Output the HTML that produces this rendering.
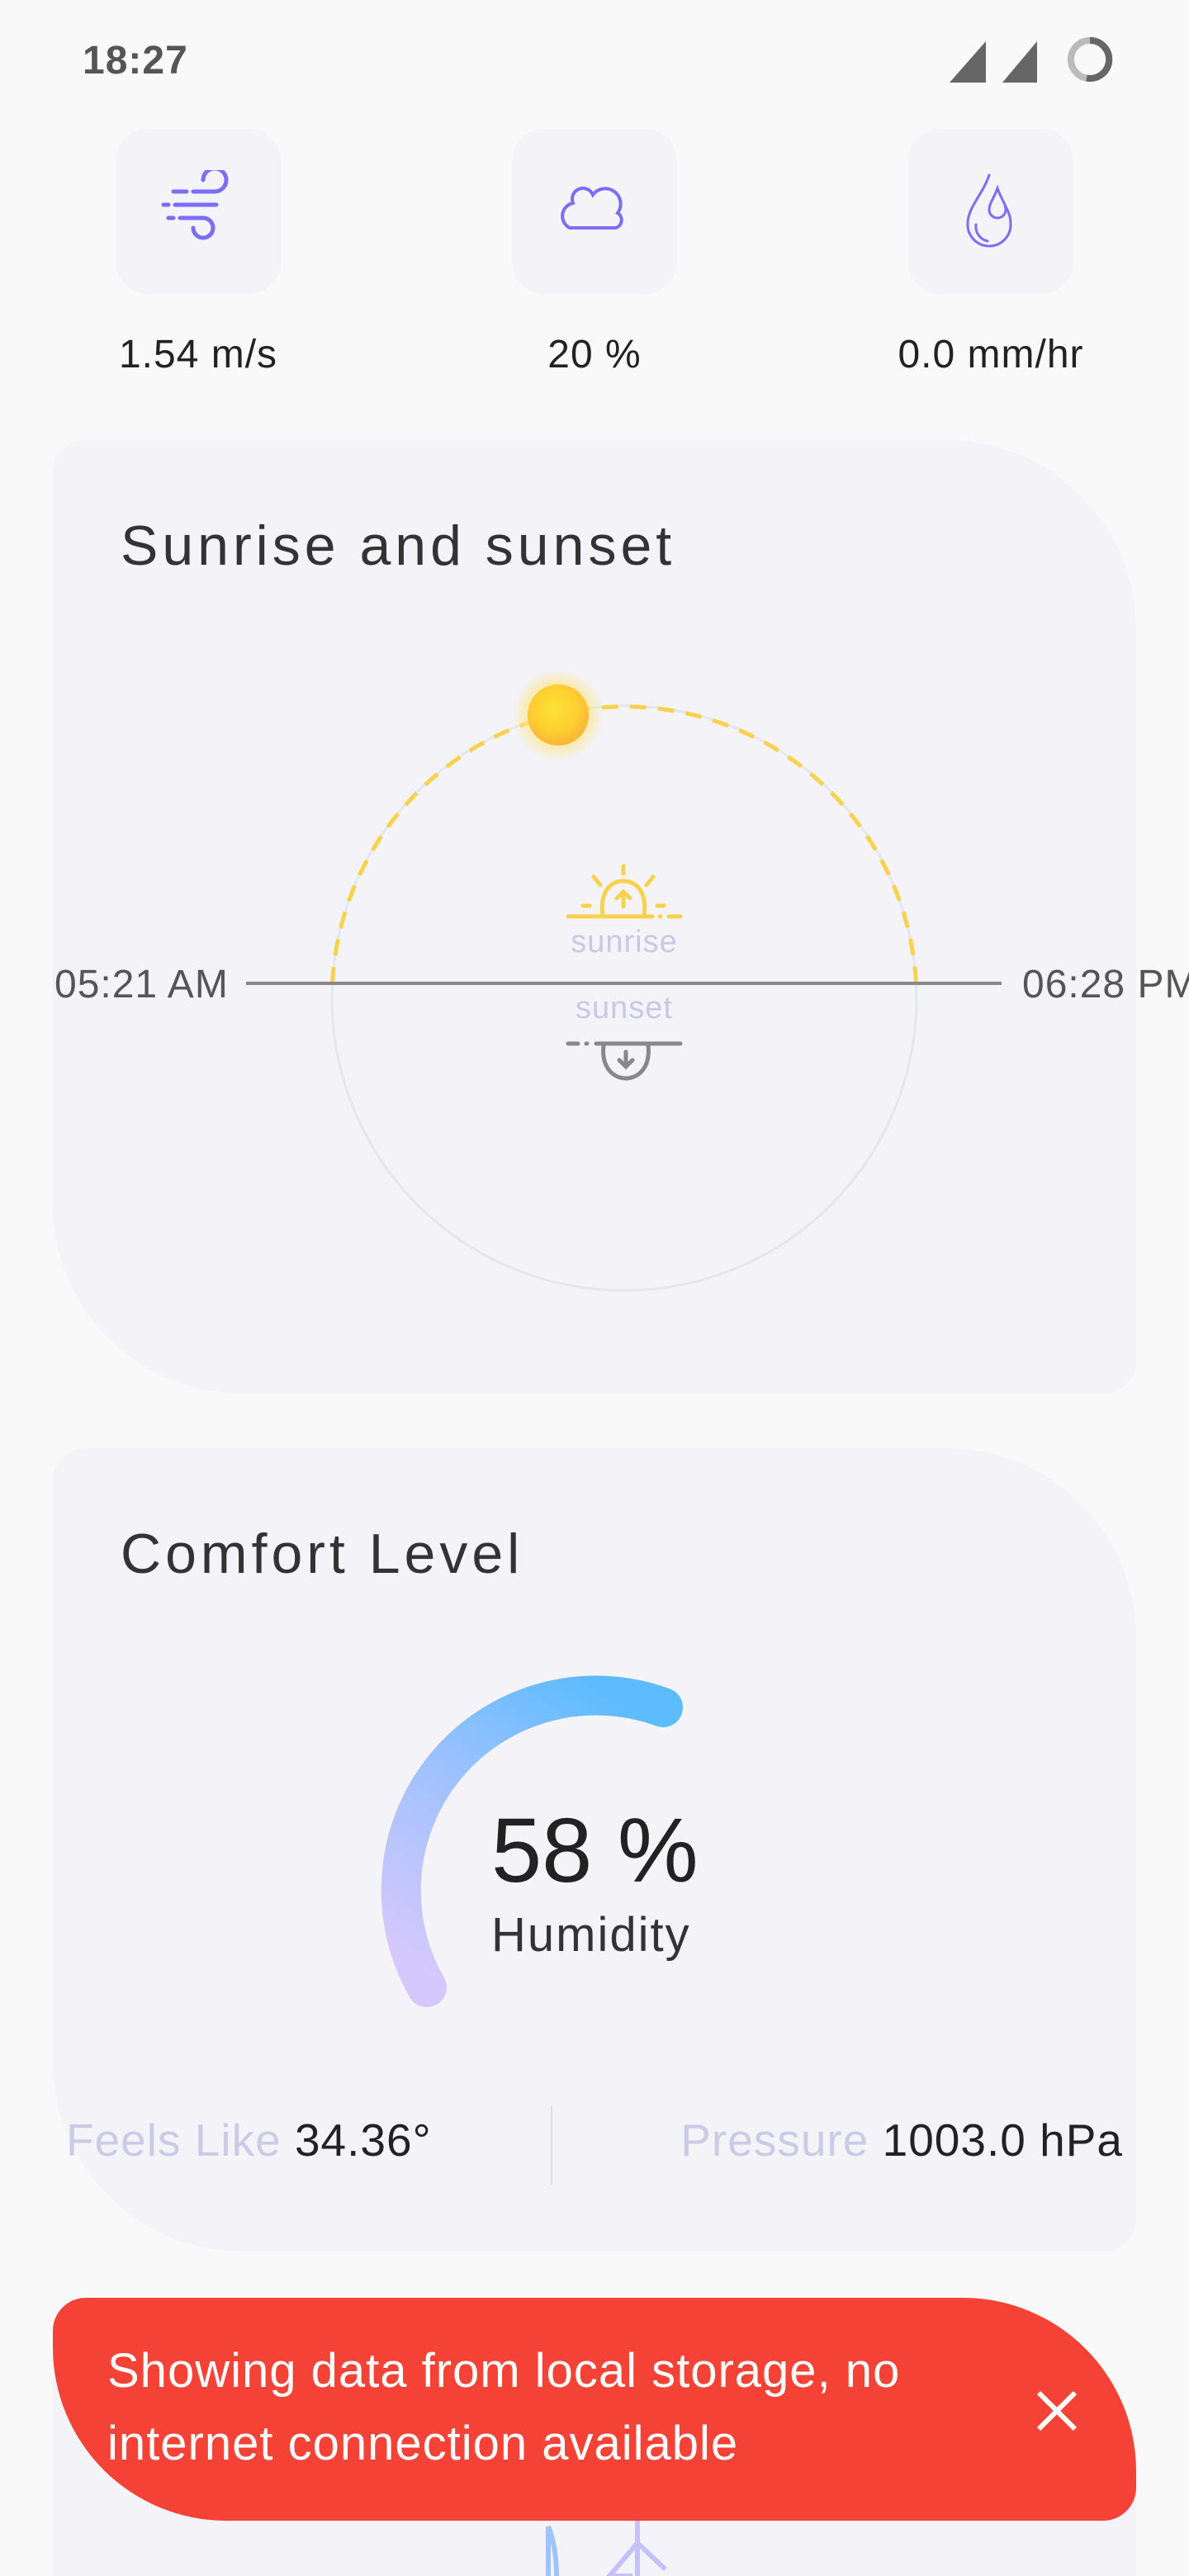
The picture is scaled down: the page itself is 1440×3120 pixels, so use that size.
<!DOCTYPE html>
<html><head><meta charset="utf-8">
<style>
html,body{margin:0;padding:0;width:1440px;height:3120px;overflow:hidden;}
body{background:#f9f9f9;position:relative;font-family:"Liberation Sans",sans-serif;}
.abs{position:absolute;}
.box{position:absolute;top:156px;width:200px;height:200px;border-radius:40px;background:#f3f3f8;}
.lbl{position:absolute;top:402px;width:300px;text-align:center;font-size:48px;color:#222;letter-spacing:1px;}
.card{position:absolute;left:64px;width:1312px;background:#f3f3f8;border-radius:40px 230px 40px 230px / 40px 230px 40px 230px;}
.title{position:absolute;left:146px;font-size:68px;color:#333;letter-spacing:5px;}
</style></head><body>
<div class="abs" style="left:100px;top:46px;font-size:48px;font-weight:bold;color:#555;letter-spacing:1px;">18:27</div>
<svg class="abs" style="left:1140px;top:36px" width="220" height="70" viewBox="0 0 220 70">
<polygon points="10,64 54,14 54,64" fill="#666"/>
<polygon points="74,64 116,14 116,64" fill="#666"/>
<circle cx="180" cy="36" r="23" fill="none" stroke="#bbb" stroke-width="8"/>
<path d="M180 13 A23 23 0 1 1 176 58.6" fill="none" stroke="#666" stroke-width="8"/>
</svg>

<div class="box" style="left:140px"></div>
<div class="box" style="left:620px"></div>
<div class="box" style="left:1100px"></div>
<svg class="abs" style="left:190px;top:206px" width="100" height="100" viewBox="0 0 100 100" fill="none" stroke="#7b6ef6" stroke-width="5" stroke-linecap="round">
<path d="M20 26 H36 M44 26 H70 A14 14 0 1 0 56 12"/>
<path d="M8 42 H14 M22 42 H72"/>
<path d="M14 58 H20 M28 58 H56 A12 12 0 1 1 44 70"/>
</svg>
<svg class="abs" style="left:670px;top:206px" width="100" height="100" viewBox="0 0 100 100" fill="none" stroke="#7b6ef6" stroke-width="4" stroke-linecap="round">
<path d="M20 70 H48 M52 70 H54 M58 70 H76 A10 10 0 0 0 78 52 A16 16 0 0 0 48 30 A12 12 0 0 0 24 40 A16 16 0 0 0 20 70 Z"/>
</svg>
<svg class="abs" style="left:1150px;top:206px" width="100" height="100" viewBox="0 0 100 100" fill="none" stroke="#7b6ef6" stroke-width="3" stroke-linecap="round">
<path d="M48 6 C40 30 22 45 22 65 A26 26 0 0 0 48 92 A26 26 0 0 0 74 65 C74 55 70 48 66 40"/>
<path d="M58 22 C54 34 48 40 48 48 A10 10 0 0 0 68 48 C68 40 62 34 58 22Z"/>
<path d="M32 66 A18 18 0 0 0 46 86"/>
</svg>
<div class="lbl" style="left:90px">1.54 m/s</div>
<div class="lbl" style="left:570px">20 %</div>
<div class="lbl" style="left:1050px">0.0 mm/hr</div>

<div class="card" style="top:533px;height:1155px;"></div>
<div class="title" style="top:622px;">Sunrise and sunset</div>
<svg class="abs" style="left:0;top:533px" width="1440" height="1155" viewBox="0 533 1440 1155">
<defs><radialGradient id="sun" cx="0.45" cy="0.4" r="0.6"><stop offset="0" stop-color="#fde034"/><stop offset="0.6" stop-color="#fdd030"/><stop offset="1" stop-color="#fbb43a"/></radialGradient>
<radialGradient id="glow"><stop offset="0.6" stop-color="#fde68a" stop-opacity="0.8"/><stop offset="1" stop-color="#fde68a" stop-opacity="0"/></radialGradient></defs>
<circle cx="756" cy="1209" r="354" fill="none" stroke="#e6e6ee" stroke-width="3"/>
<path d="M402.5 1191 A354 354 0 0 1 1109.5 1191" fill="none" stroke="#f8d24a" stroke-width="5" stroke-dasharray="20 14"/>
<line x1="298" y1="1191" x2="1213" y2="1191" stroke="#888" stroke-width="4"/>
<circle cx="676" cy="866" r="56" fill="url(#glow)"/>
<circle cx="676" cy="866" r="37" fill="url(#sun)"/>
<g fill="none" stroke="#f8d24a" stroke-width="5" stroke-linecap="round">
<path d="M688 1110 H790 M799 1110 H800 M810 1110 H824"/>
<path d="M730 1108 C726 1080 740 1067 755 1067 C770 1067 784 1080 780 1108"/>
<path d="M755 1098 V1080 M747 1088 L755 1080 L763 1088"/>
<path d="M755 1049 V1058 M719 1062 L727 1072 M791 1062 L783 1072 M706 1097 H714 M796 1097 H804"/>
</g>
<g fill="none" stroke="#888" stroke-width="5" stroke-linecap="round">
<path d="M688 1264 H700 M710 1264 H711 M722 1264 H824"/>
<path d="M731 1266 C728 1292 742 1306 758 1306 C774 1306 788 1292 785 1266"/>
<path d="M758 1274 V1292 M750 1284 L758 1292 L766 1284"/>
</g>
<text x="756" y="1153" text-anchor="middle" font-size="38" fill="#c9c9e6" font-family="Liberation Sans" letter-spacing="1">sunrise</text>
<text x="756" y="1233" text-anchor="middle" font-size="38" fill="#c9c9e6" font-family="Liberation Sans" letter-spacing="1">sunset</text>
<text x="66" y="1208" font-size="48" fill="#555" font-family="Liberation Sans" letter-spacing="1">05:21 AM</text>
<text x="1238" y="1208" font-size="48" fill="#555" font-family="Liberation Sans" letter-spacing="1">06:28 PM</text>
</svg>

<div class="card" style="top:1754px;height:973px;"></div>
<div class="title" style="top:1843px;">Comfort Level</div>
<svg class="abs" style="left:0;top:1754px" width="1440" height="973" viewBox="0 1754 1440 973">
<defs><linearGradient id="g" x1="0.2" y1="1" x2="0.8" y2="0"><stop offset="0" stop-color="#d4c8fc"/><stop offset="0.5" stop-color="#a2c2fd"/><stop offset="1" stop-color="#5dbcfe"/></linearGradient></defs>
<path d="M517 2407 A236 236 0 0 1 803 2068" fill="none" stroke="url(#g)" stroke-width="48" stroke-linecap="round"/>
<text x="595" y="2279" font-size="110" fill="#222" font-family="Liberation Sans">58 %</text>
<text x="595" y="2363" font-size="58" fill="#333" font-family="Liberation Sans" letter-spacing="2">Humidity</text>
<line x1="668" y1="2550" x2="668" y2="2646" stroke="#dcdce8" stroke-width="2"/>
<text x="80" y="2611" font-size="55" fill="#cbcbe6" font-family="Liberation Sans" letter-spacing="1">Feels Like <tspan fill="#222">34.36°</tspan></text>
<text x="1360" y="2611" text-anchor="end" font-size="55" fill="#cbcbe6" font-family="Liberation Sans" letter-spacing="1">Pressure <tspan fill="#222">1003.0 hPa</tspan></text>
</svg>

<div class="card" style="top:2785px;height:335px;border-radius:40px 230px 0 0 / 40px 230px 0 0;"></div>
<svg class="abs" style="left:620px;top:3020px" width="240" height="100" viewBox="0 0 240 100" fill="none" stroke-width="6">
<path d="M44 40 C52 60 54 80 54 100" stroke="#9fc4fd"/><path d="M44 40 V100" stroke="#9fc4fd"/>
<path d="M152 30 V100 M146 100 L118 100 L152 60 L186 92" stroke="#c8c0fd"/>
</svg>
<div class="abs" style="left:64px;top:2783px;width:1312px;height:270px;background:#f44336;border-radius:40px 210px 40px 210px / 40px 210px 40px 210px;"></div>
<div class="abs" style="left:130px;top:2828px;width:1100px;font-size:58px;line-height:88px;color:#fff;letter-spacing:1px;white-space:nowrap;">Showing data from local storage, no<br>internet connection available</div>
<svg class="abs" style="left:1252px;top:2892px" width="56" height="56" viewBox="0 0 56 56"><path d="M6 6 L50 50 M50 6 L6 50" stroke="#fff" stroke-width="6"/></svg>
</body></html>
